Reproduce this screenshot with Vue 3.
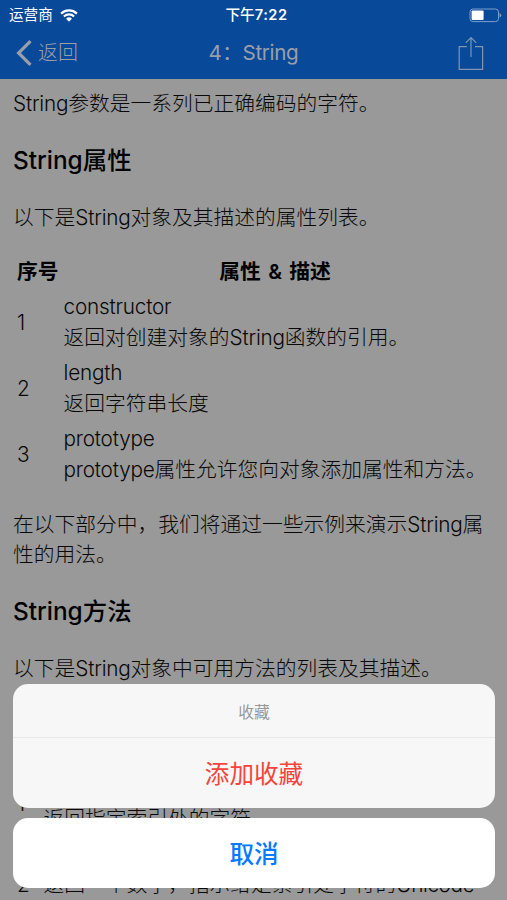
<script setup>
const properties = [
  { id: 1, name: 'constructor', before: '返回对创建对象的', latin: 'String', after: '函数的引用。' },
  { id: 2, name: 'length', before: '返回字符串长度', latin: '', after: '' },
  { id: 3, name: 'prototype', before: '', latin: 'prototype', after: '属性允许您向对象添加属性和方法。' },
]
</script>

<template>
  <div class="screen">
    <header class="top">
      <div class="status">
        <div class="carrier">
          <span>运营商</span>
          <svg class="wifi" viewBox="0 0 18 13" aria-hidden="true">
            <path d="M1.1 4.6a11.4 11.4 0 0 1 15.8 0M3.9 7.5a7.3 7.3 0 0 1 10.2 0" fill="none" stroke="#fff" stroke-width="2.2" />
            <path d="M9 12.8 6 9.7a4.3 4.3 0 0 1 6 0z" fill="#fff" />
          </svg>
        </div>
        <span class="time">下午<span class="digits">7:22</span></span>
        <svg class="battery" viewBox="0 0 33 15" aria-hidden="true">
          <rect x="1" y="1" width="28.5" height="12.6" rx="3" fill="none" stroke="#7c9fcc" stroke-width="1" />
          <rect x="2.6" y="2.6" width="12" height="9.4" rx="1" fill="#fff" />
          <path d="M30.6 5v4.6q1.6-.7 1.6-2.3t-1.6-2.3z" fill="#7c9fcc" />
        </svg>
      </div>
      <nav class="nav">
        <div class="back">
          <svg viewBox="0 0 16 26" aria-hidden="true"><path d="M14.5 1.2 2.6 13l11.9 11.8" fill="none" stroke="#999fa9" stroke-width="3.2" /></svg>
          <span>返回</span>
        </div>
        <h1>4：<span class="en">String</span></h1>
        <svg class="share" viewBox="0 0 26 35" aria-hidden="true">
          <path d="M8.8 10.7H1.2v22.6h23.4V10.7H17M13 21V1.5M7.7 6.8 13 1.5l5.3 5.3" fill="none" stroke="#8095b0" stroke-width="1.2" />
        </svg>
      </nav>
    </header>

    <main class="article">
      <p><span class="en">String</span>参数是一系列已正确编码的字符。</p>
      <h3><span>String</span>属性</h3>
      <p>以下是<span class="en">String</span>对象及其描述的属性列表。</p>
      <section class="table">
        <div class="row head"><b>序号</b><b>属性 <span class="amp">&amp;</span> 描述</b></div>
        <div v-for="item in properties" :key="item.id" class="row">
          <span class="en">{{ item.id }}</span>
          <div>
            <div class="en name">{{ item.name }}</div>
            <div>{{ item.before }}<span class="en">{{ item.latin }}</span>{{ item.after }}</div>
          </div>
        </div>
      </section>
      <p>在以下部分中，我们将通过一些示例来演示<span class="en">String</span>属<br />性的用法。</p>
      <h3><span>String</span>方法</h3>
      <p>以下是<span class="en">String</span>对象中可用方法的列表及其描述。</p>
      <section class="table methods">
        <div class="row head"><b>序<br />号</b><b>方法 <span class="amp">&amp;</span> 描述</b></div>
        <div class="row">
          <span class="en">1</span>
          <div><div class="en name">charAt()</div><div>返回指定索引处的字符</div></div>
        </div>
        <div class="row">
          <span class="en">2</span>
          <div><div class="en name">charCodeAt()</div><div>返回一个数字，指示给定索引处字符的<span class="en">Unicode</span></div><div class="spacer"></div></div>
        </div>
      </section>
    </main>

    <div class="sheet">
      <div class="group">
        <div class="caption">收藏</div>
        <button class="action danger">添加收藏</button>
      </div>
      <button class="action cancel">取消</button>
    </div>
  </div>
</template>

<style>
body {
  overflow: hidden;
}
</style>

<style scoped>
.screen {
  position: relative;
  height: 900px;
  overflow: hidden;
  background: #999;
  color: #080808;
  font-family: Inter, "Noto Sans CJK SC", sans-serif;
  font-weight: 300;
  font-size: 20.75px;
  line-height: 30px;
  white-space: nowrap;
}
.en {
  letter-spacing: -0.2px;
}
.top {
  height: 79px;
  box-sizing: border-box;
  background: #09499a;
}
.status {
  display: grid;
  grid-template-columns: 1fr auto 1fr;
  align-items: center;
  height: 27px;
  padding: 0 5px 0 9px;
  color: #fff;
  font-size: 14.6px;
  font-weight: 400;
}
.carrier {
  display: flex;
  align-items: center;
  gap: 7px;
}
.wifi {
  width: 18px;
  height: 13px;
}
.time {
  padding-left: 2px;
  font-weight: 500;
}
.digits {
  font-weight: 600;
  letter-spacing: 0.5px;
}
.battery {
  justify-self: end;
  width: 33px;
  height: 15px;
}
.nav {
  display: grid;
  grid-template-columns: 1fr auto 1fr;
  align-items: center;
  height: 52px;
  padding: 0 23px 0 16px;
  color: #999fa9;
}
.back {
  display: flex;
  align-items: center;
  gap: 6px;
  font-size: 20px;
}
.back svg {
  width: 16px;
  height: 26px;
}
.nav h1 {
  margin: 0;
  padding: 0 0 0 7px;
  font-size: 20.65px;
  font-weight: 400;
}
.nav h1 .en {
  letter-spacing: -0.35px;
}
.share {
  justify-self: end;
  width: 26px;
  height: 35px;
}
.article {
  padding: 9.6px 17px 0 13px;
}
.article p {
  margin: 0 0 27px;
}
.article h3 {
  margin: -1px 0 28px;
  color: #000;
  font-size: 24.4px;
  font-weight: 500;
  line-height: 30px;
}
.table {
  margin: -6px 0 22.4px;
}
.row {
  display: grid;
  grid-template-columns: 47px 1fr;
  align-items: center;
  padding: 3px 0;
}
.row > * {
  padding: 0 4px;
}
.row > div {
  padding-left: 3.5px;
}
.name {
  margin: -1px 0 1px;
}
.head {
  color: #000;
}
.head b {
  font-weight: 700;
  text-align: center;
}
.amp {
  margin: 0 2.5px;
  font-weight: 600;
}
.methods .row {
  grid-template-columns: 27px 1fr;
}
.methods .row .en {
  letter-spacing: -0.4px;
}
.spacer {
  height: 30px;
}
.sheet {
  position: absolute;
  left: 13px;
  right: 12px;
  bottom: 12px;
  display: flex;
  flex-direction: column;
  gap: 10px;
}
.group {
  border-radius: 15px;
  overflow: hidden;
  background: #f7f7f7;
}
.caption {
  height: 53px;
  border-bottom: 1px solid #e8e8e8;
  color: #979797;
  font-size: 15.8px;
  font-weight: 400;
  line-height: 57px;
  text-align: center;
}
.action {
  display: block;
  width: 100%;
  height: 70px;
  margin: 0;
  padding: 0 0 3px;
  border: 0;
  background: transparent;
  font-family: inherit;
  font-size: 24.6px;
  font-weight: 400;
  text-align: center;
}
.danger {
  color: #f5443b;
}
.cancel {
  border-radius: 15px;
  background: #fff;
  color: #087aff;
  font-weight: 500;
}
</style>
